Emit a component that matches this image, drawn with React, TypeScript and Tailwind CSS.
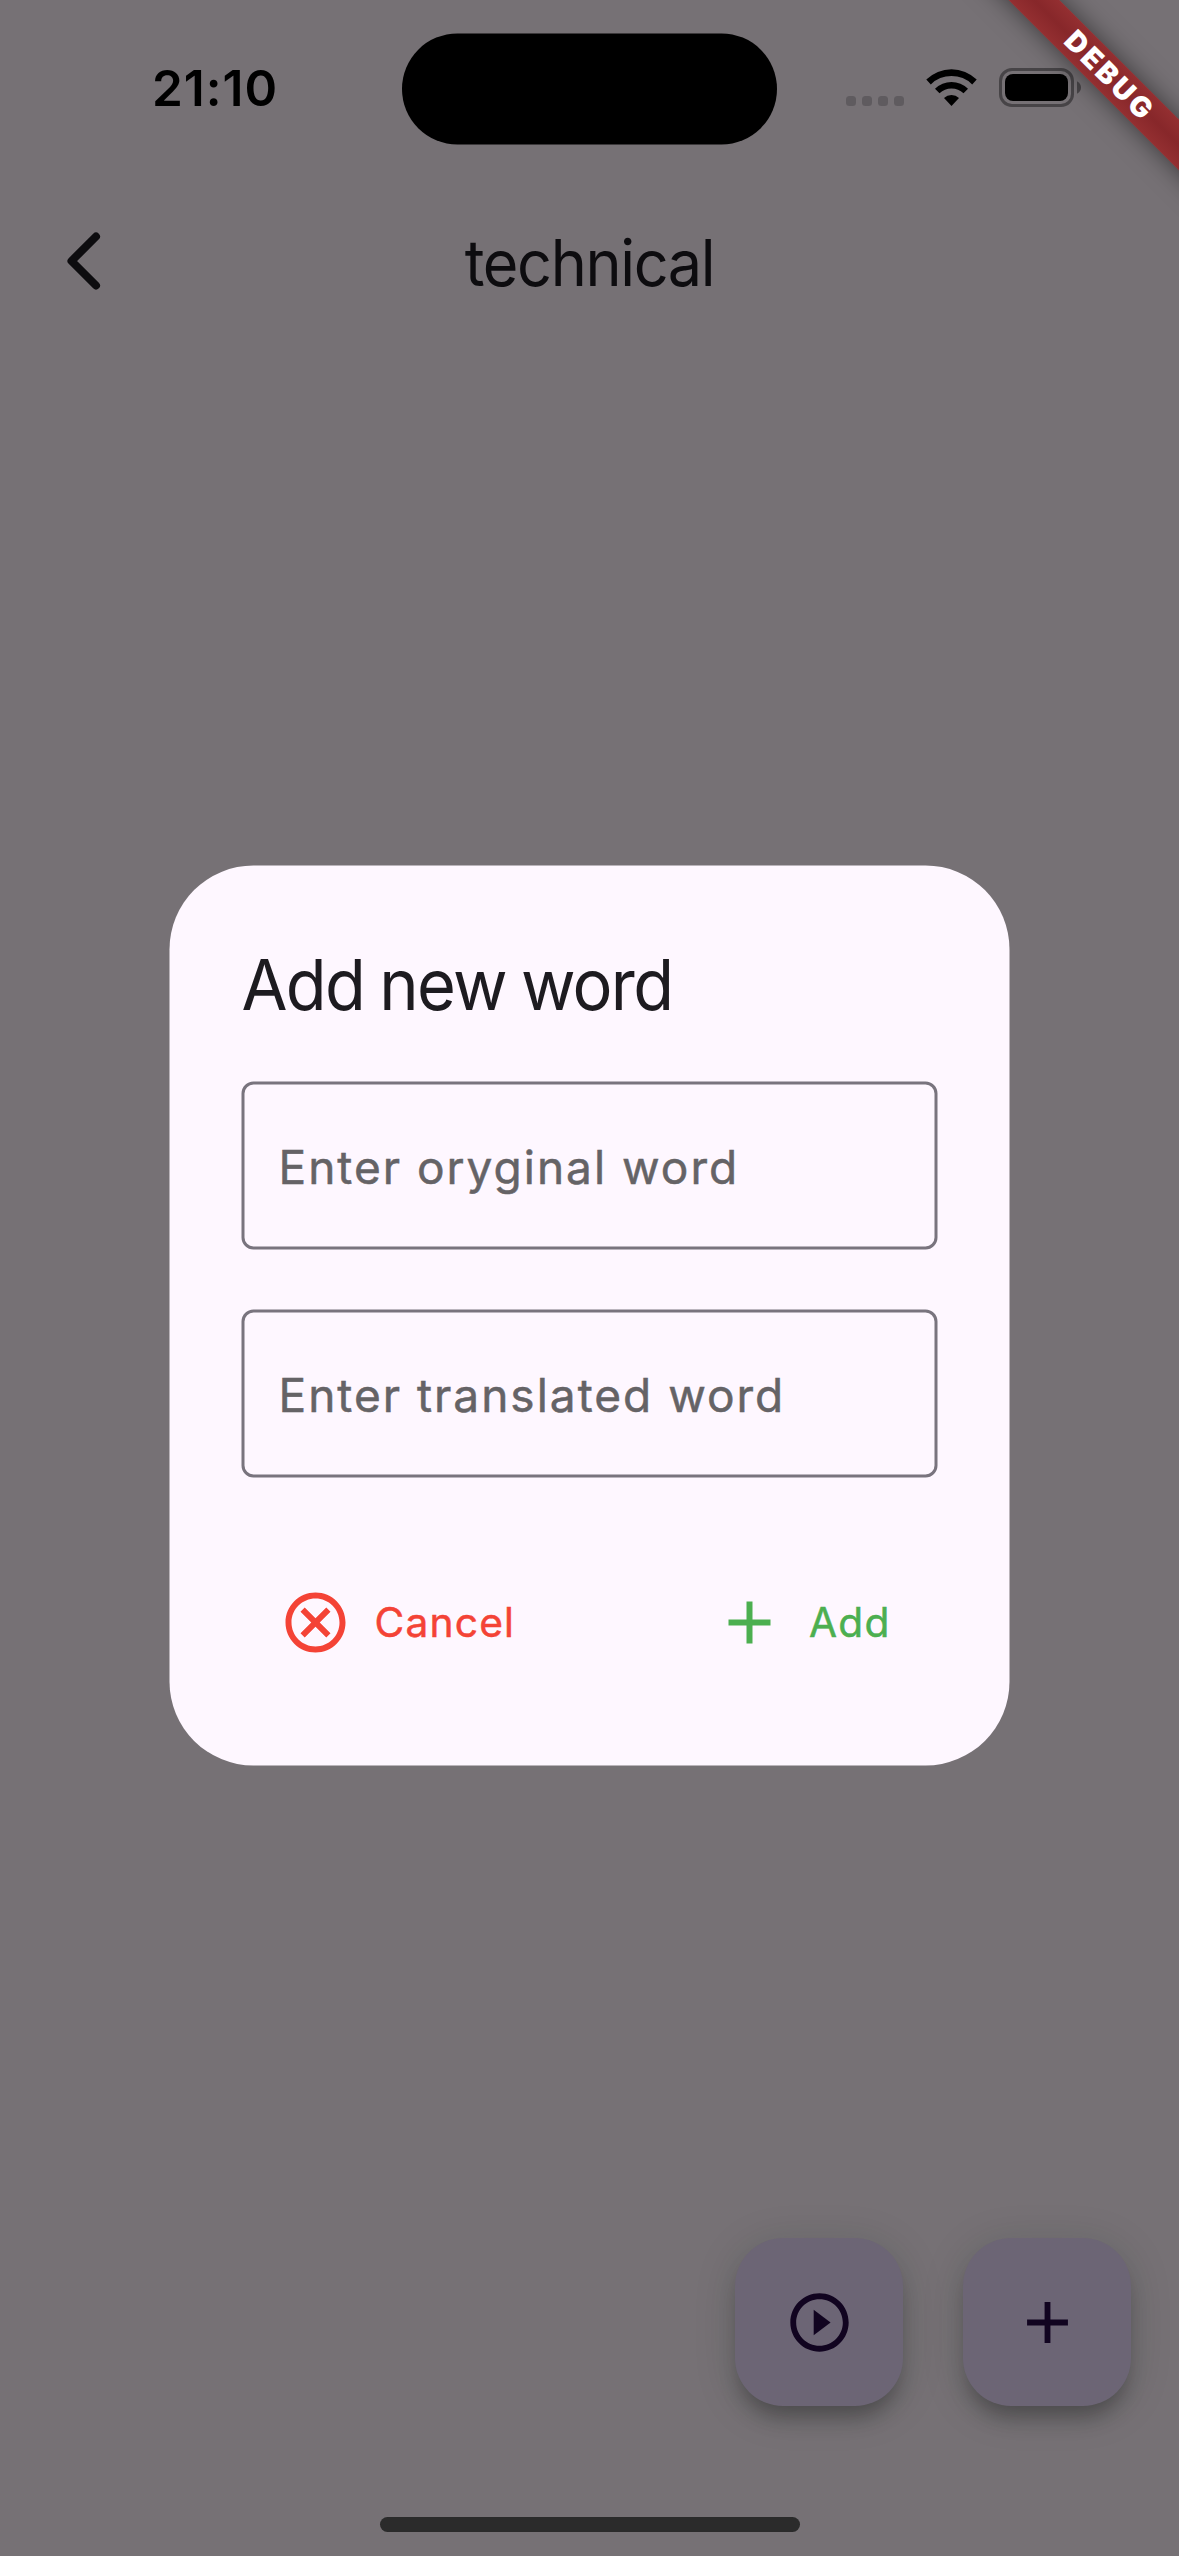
import React from "react";

function StatusBar() {
  return (
    <div className="flex h-[177px] items-start">
      <div className="flex w-[402px] justify-center pt-[58px] pl-[28px] text-[49.5px] leading-[60px] font-semibold tracking-[1px] text-black">
        <span>21:10</span>
      </div>
      <div className="mt-[33px] h-[111px] w-[375px] translate-y-[0.4px] rounded-full bg-black" />
      <div className="flex items-start pt-[68px] pl-[69px]">
        <div className="mt-[28px] flex gap-[6px]">
          {[0, 1, 2, 3].map((i) => (
            <span key={i} className="size-[10px] rounded-[3.5px] bg-[#5f5b5f]" />
          ))}
        </div>
        <svg className="ml-[22px] h-[39px] w-[51px]" viewBox="0 0 51 39" fill="black">
          <path d="M0.3 11.6 A36 36 0 0 1 50.7 11.6 L46.2 16.4 A29.4 29.4 0 0 0 4.8 16.4 Z" />
          <path d="M9 20.8 A23.6 23.6 0 0 1 42 20.8 L37.5 25.3 A17.4 17.4 0 0 0 13.5 25.3 Z" />
          <path d="M18 30 A11 11 0 0 1 33 30 L25.5 38 Z" strokeLinejoin="round" />
        </svg>
        <svg className="ml-[22px] h-[39px] w-[83px]" viewBox="0 0 83 39">
          <rect x="1.5" y="1.5" width="72" height="36" rx="11.5" fill="none" stroke="#474447" strokeWidth="3" />
          <rect x="6" y="6" width="63" height="27" rx="8" fill="black" />
          <path d="M78 13.2 Q82 15.5 82 19.5 Q82 23.5 78 25.8 Z" fill="#474447" />
        </svg>
      </div>
    </div>
  );
}

function AppBar() {
  return (
    <header className="grid h-[168px] grid-cols-[168px_1fr_168px] items-center text-[#0d0c0f]">
      <svg className="ml-[66px] h-[60px] w-[36px]" viewBox="0 0 36 60" fill="none" stroke="currentColor" strokeWidth="8" strokeLinecap="round" strokeLinejoin="round">
        <path d="M30 5.5 L5.5 30 L30 54.5" />
      </svg>
      <h1 className="scale-x-[0.955] pt-[3px] text-center text-[64px] leading-[84px] tracking-[-1.4px]">technical</h1>
    </header>
  );
}

function Plus({ className }: { className: string }) {
  return (
    <svg className={className} viewBox="0 0 24 24" fill="currentColor">
      <path d="M19 13h-6v6h-2v-6H5v-2h6V5h2v6h6v2z" />
    </svg>
  );
}

function FloatingButton({ children }: { children: React.ReactNode }) {
  return (
    <button className="grid size-[168px] place-items-center rounded-[48px] bg-[#6c6575] text-[#110420] shadow-[0_16px_20px_-5px_rgba(0,0,0,0.27),0_6px_40px_0_rgba(20,40,30,0.17)]">
      {children}
    </button>
  );
}

function Field({ hint }: { hint: string }) {
  return (
    <div className="flex h-[168px] items-center rounded-[12px] border-[3px] border-[#79747e] pt-[1px] pl-[34px] text-[46px] leading-[60px] tracking-[2px] text-[#656366] [-webkit-text-stroke:0.5px_#656366]">
      <span>{hint}</span>
    </div>
  );
}

function AddWordDialog() {
  return (
    <div className="absolute inset-0 pt-[865px] pl-[169px]">
      <div className="h-[900px] w-[840px] translate-x-[0.5px] translate-y-[0.5px] rounded-[84px] bg-[#fef7ff] px-[72px] pt-[72px]">
        <h2 className="origin-left scale-x-[0.953] text-[70px] leading-[94px] tracking-[-1.8px] [word-spacing:-2px] whitespace-nowrap text-[#1d1b20]">Add new word</h2>
        <div className="mt-[50px] flex flex-col gap-[60px]">
          <Field hint="Enter oryginal word" />
          <Field hint="Enter translated word" />
        </div>
        <div className="mt-[109px] flex h-[72px] items-center justify-between pr-[47px] pl-[38px] text-[40.7px] leading-[60px]">
          <button className="flex items-center gap-[23px] text-[#f44336]">
            <svg className="size-[72px]" viewBox="0 0 24 24" fill="currentColor">
              <path d="M15.59 7 12 10.59 8.41 7 7 8.41 10.59 12 7 15.59 8.41 17 12 13.41 15.59 17 17 15.59 13.41 12 17 8.41z" />
              <path d="M12 2C6.47 2 2 6.47 2 12s4.47 10 10 10 10-4.47 10-10S17.53 2 12 2zm0 18c-4.41 0-8-3.59-8-8s3.59-8 8-8 8 3.59 8 8-3.59 8-8 8z" />
            </svg>
            <span className="tracking-[1.2px] [-webkit-text-stroke:0.5px_#f44336]">Cancel</span>
          </button>
          <button className="flex items-center gap-[24px] text-[#4caf50]">
            <Plus className="size-[72px]" />
            <span className="tracking-[1.2px] [-webkit-text-stroke:0.5px_#4caf50]">Add</span>
          </button>
        </div>
      </div>
    </div>
  );
}

function DebugBanner() {
  return (
    <div className="absolute top-0 right-0 size-[260px] overflow-hidden">
      <div className="absolute top-[54.5px] left-[-32px] flex h-[36px] w-[440px] rotate-45 items-center justify-center bg-linear-to-b from-[#942f31] via-[#87272a] to-[#942f31] pl-[8px] text-[28.5px] leading-[36px] font-black tracking-[3px] text-white shadow-[0_0_26px_rgba(0,0,0,0.5)]">
        <span>DEBUG</span>
      </div>
    </div>
  );
}

export default function App() {
  return (
    <div className="relative flex h-[2556px] w-[1179px] flex-col overflow-hidden bg-[#767175] font-['Inter',sans-serif]">
      <StatusBar />
      <AppBar />
      <main className="flex-1" />
      <div className="flex justify-end gap-[60px] pr-[48px]">
        <FloatingButton>
          <svg className="size-[70px] translate-x-[0.5px] translate-y-[0.5px]" viewBox="0 0 24 24" fill="currentColor">
            <path d="M12 2C6.48 2 2 6.48 2 12s4.48 10 10 10 10-4.48 10-10S17.52 2 12 2zm0 18c-4.41 0-8-3.59-8-8s3.59-8 8-8 8 3.59 8 8-3.59 8-8 8z" />
            <path d="M10 7.6v8.8l5.8-4.4z" />
          </svg>
        </FloatingButton>
        <FloatingButton>
          <Plus className="size-[70px] translate-x-[0.5px] translate-y-[0.5px]" />
        </FloatingButton>
      </div>
      <div className="flex h-[150px] justify-center pt-[111px]">
        <div className="h-[15px] w-[420px] rounded-full bg-[#2b2b2b]" />
      </div>
      <AddWordDialog />
      <DebugBanner />
    </div>
  );
}
